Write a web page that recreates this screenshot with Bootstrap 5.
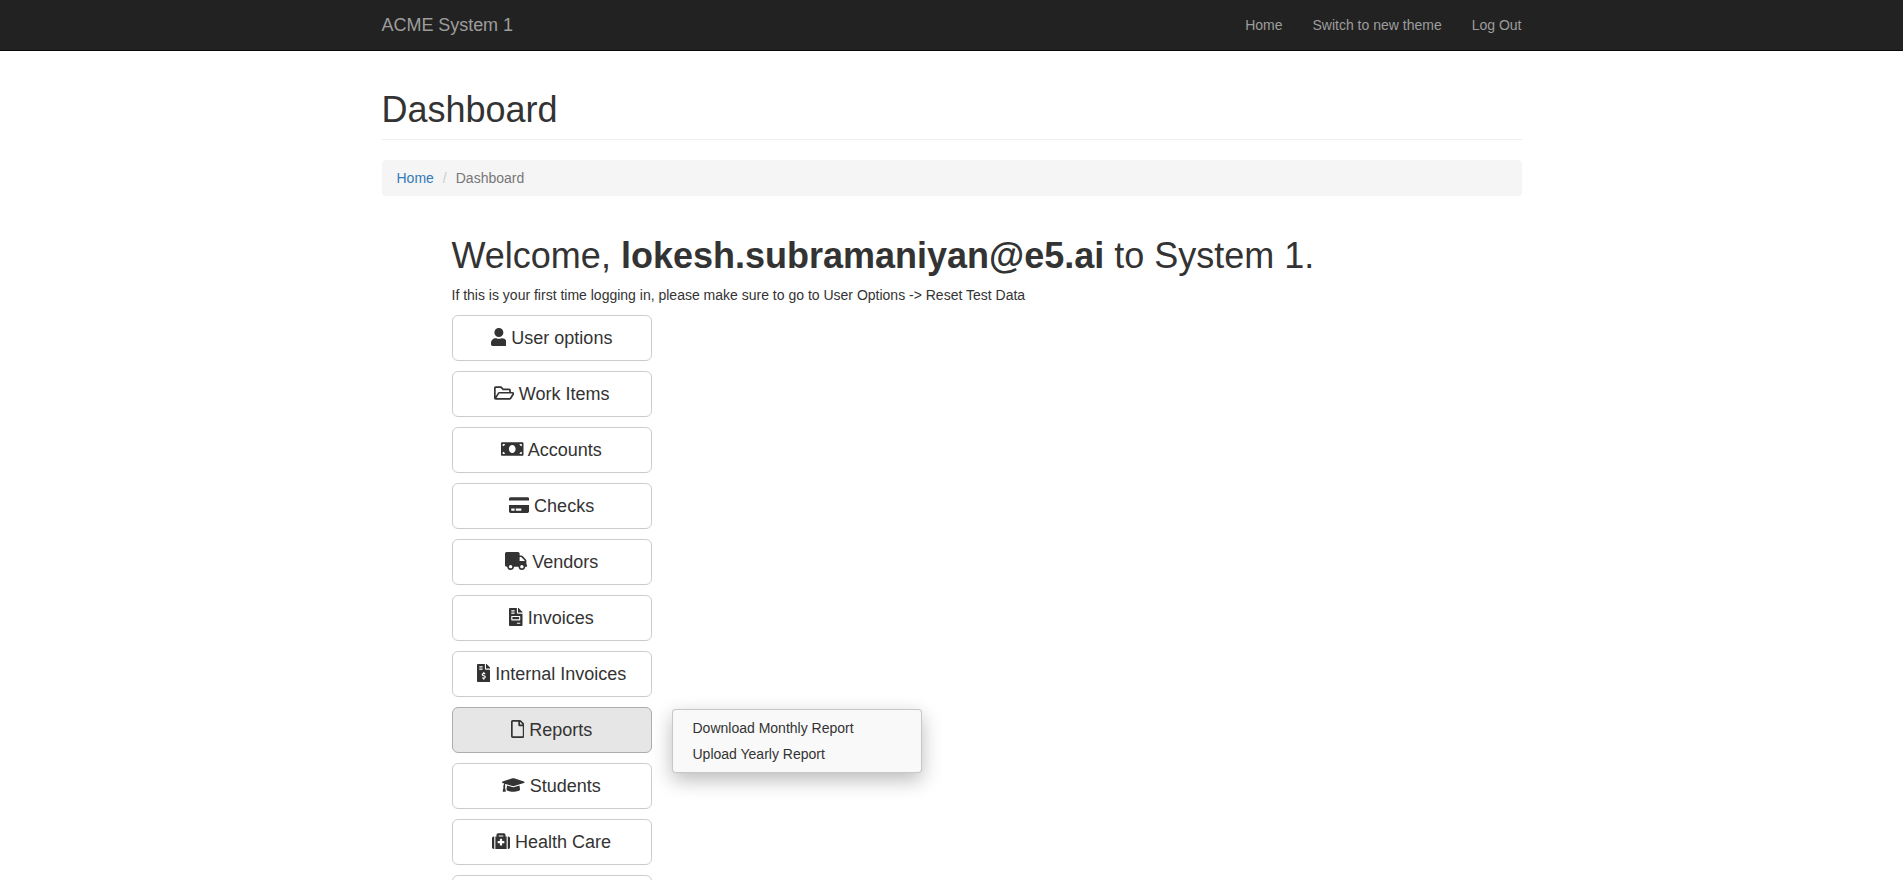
<!DOCTYPE html>
<html lang="en">
<head>
<meta charset="utf-8">
<meta name="viewport" content="width=device-width, initial-scale=1">
<title>ACME System 1 - Dashboard</title>
<link href="https://cdn.jsdelivr.net/npm/bootstrap@5.3.0/dist/css/bootstrap.min.css" rel="stylesheet">
<style>
  body { font-family: "Liberation Sans", Arial, sans-serif; font-size: 14px; line-height: 20px; color: #333; height: 100vh; overflow: hidden; }
  .container { max-width: 1170px; padding-left: 15px; padding-right: 15px; }
  .topbar { background: #222; border-bottom: 1px solid #080808; height: 51px; padding: 0; }
  .topbar .container { padding: 0 15px; }
  .topbar .navbar-brand { font-size: 18px; line-height: 20px; letter-spacing: -.04px; padding: 15px 0; margin: 0; color: #9d9d9d; }
  .topbar .navbar-nav .nav-link { color: #9d9d9d; padding: 15px; line-height: 20px; }
  .topbar .navbar-nav { margin-right: -15px; }
  .page-title { font-size: 36px; font-weight: 400; line-height: 1.1; margin: 0; }
  .page-top { margin: 39.4px 0 20px; padding-bottom: 9px; border-bottom: 1px solid #eee; }
  .breadcrumb { --bs-breadcrumb-divider-color: #ccc; background: #f5f5f5; border-radius: 4px; padding: 8px 15px; margin: 0 0 40px; font-size: 14px; }
  .breadcrumb a { color: #337ab7; text-decoration: none; }
  .breadcrumb .breadcrumb-item.active { color: #777; }
  .breadcrumb-item + .breadcrumb-item { padding-left: 4px; }
  .breadcrumb-item + .breadcrumb-item::before { padding: 0 9px 0 5px; }
  .welcome { padding-left: 70px; }
  .intro { margin: 9px 0 10.6px; }
  .menu-stack { width: 200px; gap: 10px; }
  .menu-stack .btn { --bs-btn-color: #333; --bs-btn-bg: #fff; --bs-btn-border-color: #ccc; --bs-btn-hover-color: #333; --bs-btn-hover-bg: #e6e6e6; --bs-btn-hover-border-color: #adadad; --bs-btn-active-color: #333; --bs-btn-active-bg: #e6e6e6; --bs-btn-active-border-color: #adadad;
    width: 200px; height: 46px; font-size: 18px; line-height: 24px; padding: 10px 0; border-radius: 6px; white-space: nowrap; }
  .menu-stack svg { height: 1em; vertical-align: -.125em; fill: currentColor; }
  .flyout.dropdown-menu { left: 220px; top: 2px; width: 250px; margin: 0; padding: 5px 0; font-size: 14px; color: #333; background: #f9f9f9; border: 1px solid rgba(0,0,0,.2); border-radius: 4px; box-shadow: 0 7px 20px rgba(0,0,0,.27); }
  .flyout .dropdown-item { color: #333; padding: 3px 20px; line-height: 20px; }
</style>
</head>
<body>
<nav class="navbar navbar-expand topbar">
  <div class="container">
    <a class="navbar-brand" href="#">ACME System 1</a>
    <ul class="navbar-nav ms-auto">
      <li class="nav-item"><a class="nav-link" href="#">Home</a></li>
      <li class="nav-item"><a class="nav-link" href="#">Switch to new theme</a></li>
      <li class="nav-item"><a class="nav-link" href="#">Log Out</a></li>
    </ul>
  </div>
</nav>
<main class="container">
  <div class="page-top"><h1 class="page-title">Dashboard</h1></div>
  <ol class="breadcrumb">
    <li class="breadcrumb-item"><a href="#">Home</a></li>
    <li class="breadcrumb-item active">Dashboard</li>
  </ol>
  <div class="welcome">
    <h1 class="page-title">Welcome, <b>lokesh.subramaniyan@e5.ai</b> to System 1.</h1>
    <p class="intro">If this is your first time logging in, please make sure to go to User Options -&gt; Reset Test Data</p>
    <div class="menu-stack d-flex flex-column">
      <button class="btn" type="button"><svg viewBox="0 0 448 512"><path d="M224 256c70.7 0 128-57.3 128-128S294.7 0 224 0 96 57.3 96 128s57.3 128 128 128zm89.6 32h-16.7c-22.2 10.2-46.9 16-72.9 16s-50.6-5.8-72.9-16h-16.7C60.2 288 0 348.2 0 422.4V464c0 26.5 21.5 48 48 48h352c26.5 0 48-21.5 48-48v-41.6c0-74.2-60.2-134.4-134.4-134.4z"/></svg> User options</button>
      <button class="btn" type="button"><svg viewBox="0 0 576 512"><path d="M527.9 224H480v-48c0-26.5-21.5-48-48-48H272l-64-64H48C21.5 64 0 85.5 0 112v288c0 26.5 21.5 48 48 48h400c16.5 0 31.9-8.5 40.7-22.6l79.9-128c20-31.9-3-73.4-40.7-73.4zM48 118c0-3.3 2.7-6 6-6h134.1l64 64H426c3.3 0 6 2.7 6 6v42H152c-16.8 0-32.4 8.8-41.1 23.2L48 351.4zm400 282H72l77.2-128H528z"/></svg> Work Items</button>
      <button class="btn" type="button"><svg viewBox="0 0 640 512"><path d="M608 64H32C14.33 64 0 78.33 0 96v320c0 17.67 14.33 32 32 32h576c17.67 0 32-14.33 32-32V96c0-17.67-14.33-32-32-32zM48 400v-64c35.35 0 64 28.65 64 64H48zm0-224v-64h64c0 35.35-28.65 64-64 64zm272 192c-53.02 0-96-50.15-96-112 0-61.86 42.98-112 96-112s96 50.13 96 112c0 61.87-43 112-96 112zm272 32h-64c0-35.35 28.65-64 64-64v64zm0-224c-35.35 0-64-28.65-64-64h64v64z"/></svg> Accounts</button>
      <button class="btn" type="button"><svg viewBox="0 0 576 512"><path d="M0 432c0 26.5 21.5 48 48 48h480c26.5 0 48-21.5 48-48V256H0v176zm192-68c0-6.6 5.4-12 12-12h136c6.6 0 12 5.4 12 12v40c0 6.6-5.4 12-12 12H204c-6.6 0-12-5.4-12-12v-40zm-128 0c0-6.6 5.4-12 12-12h72c6.6 0 12 5.4 12 12v40c0 6.6-5.4 12-12 12H76c-6.6 0-12-5.4-12-12v-40zM576 80v48H0V80c0-26.5 21.5-48 48-48h480c26.5 0 48 21.5 48 48z"/></svg> Checks</button>
      <button class="btn" type="button"><svg viewBox="0 0 640 512"><path d="M624 352h-16V243.9c0-12.7-5.1-24.9-14.1-33.9L494 110.1c-9-9-21.2-14.1-33.9-14.1H416V48c0-26.5-21.5-48-48-48H48C21.5 0 0 21.5 0 48v320c0 26.5 21.5 48 48 48h16c0 53 43 96 96 96s96-43 96-96h128c0 53 43 96 96 96s96-43 96-96h48c8.8 0 16-7.2 16-16v-32c0-8.8-7.2-16-16-16zM160 464c-26.5 0-48-21.5-48-48s21.5-48 48-48 48 21.5 48 48-21.5 48-48 48zm320 0c-26.5 0-48-21.5-48-48s21.5-48 48-48 48 21.5 48 48-21.5 48-48 48zm80-208H416V144h44.1l99.9 99.9V256z"/></svg> Vendors</button>
      <button class="btn" type="button"><svg viewBox="0 0 384 512"><path d="M288 256H96v64h192v-64zm89-151L279.1 7c-4.5-4.5-10.6-7-17-7H256v128h128v-6.1c0-6.3-2.5-12.4-7-16.9zm-153 31V0H24C10.7 0 0 10.7 0 24v464c0 13.3 10.7 24 24 24h336c13.3 0 24-10.7 24-24V160H248c-13.2 0-24-10.8-24-24zM64 72c0-4.42 3.58-8 8-8h80c4.42 0 8 3.58 8 8v16c0 4.42-3.58 8-8 8H72c-4.42 0-8-3.58-8-8V72zm0 64c0-4.42 3.58-8 8-8h80c4.42 0 8 3.58 8 8v16c0 4.42-3.58 8-8 8H72c-4.42 0-8-3.58-8-8v-16zm256 304c0 4.42-3.58 8-8 8h-80c-4.42 0-8-3.58-8-8v-16c0-4.42 3.58-8 8-8h80c4.42 0 8 3.58 8 8v16zm0-200v96c0 8.84-7.16 16-16 16H80c-8.84 0-16-7.16-16-16v-96c0-8.84 7.16-16 16-16h224c8.84 0 16 7.16 16 16z"/></svg> Invoices</button>
      <button class="btn" type="button"><svg viewBox="0 0 384 512"><path d="M377 105L279.1 7c-4.5-4.5-10.6-7-17-7H256v128h128v-6.1c0-6.3-2.5-12.4-7-16.9zm-153 31V0H24C10.7 0 0 10.7 0 24v464c0 13.3 10.7 24 24 24h336c13.3 0 24-10.7 24-24V160H248c-13.2 0-24-10.8-24-24zM64 72c0-4.42 3.58-8 8-8h80c4.42 0 8 3.58 8 8v16c0 4.42-3.58 8-8 8H72c-4.42 0-8-3.58-8-8V72zm0 80v-16c0-4.42 3.58-8 8-8h80c4.42 0 8 3.58 8 8v16c0 4.42-3.58 8-8 8H72c-4.42 0-8-3.58-8-8zm144 263.88V440c0 4.42-3.58 8-8 8h-16c-4.42 0-8-3.58-8-8v-24.29c-11.29-.58-22.27-4.52-31.37-11.35-3.9-2.93-4.1-8.77-.57-12.14l11.75-11.21c2.77-2.64 6.89-2.76 10.13-.73 3.87 2.42 8.26 3.72 12.82 3.72h28.11c6.5 0 11.8-5.92 11.8-13.19 0-5.95-3.61-11.19-8.77-12.73l-45-13.5c-18.59-5.58-31.58-23.42-31.58-43.39 0-24.52 19.05-44.44 42.67-45.07V232c0-4.42 3.58-8 8-8h16c4.42 0 8 3.58 8 8v24.29c11.29.58 22.27 4.51 31.37 11.35 3.9 2.93 4.1 8.77.57 12.14l-11.75 11.21c-2.77 2.64-6.89 2.76-10.13.73-3.87-2.43-8.26-3.72-12.82-3.72h-28.11c-6.5 0-11.8 5.92-11.8 13.19 0 5.95 3.61 11.19 8.77 12.73l45 13.5c18.59 5.58 31.58 23.42 31.58 43.39 0 24.53-19.05 44.44-42.67 45.07z"/></svg> Internal Invoices</button>
      <div class="position-relative">
        <button class="btn active d-block" type="button"><svg viewBox="0 0 384 512"><path d="M369.9 97.9L286 14C277 5 264.8-.1 252.1-.1H48C21.5 0 0 21.5 0 48v416c0 26.5 21.5 48 48 48h288c26.5 0 48-21.5 48-48V131.9c0-12.7-5.1-25-14.1-34zM332.1 128H256V51.9l76.1 76.1zM48 464V48h160v104c0 13.3 10.7 24 24 24h104v288H48z"/></svg> Reports</button>
        <ul class="dropdown-menu show flyout">
          <li><a class="dropdown-item" href="#">Download Monthly Report</a></li>
          <li><a class="dropdown-item" href="#">Upload Yearly Report</a></li>
        </ul>
      </div>
      <button class="btn" type="button"><svg viewBox="0 0 640 512"><path d="M622.34 153.2L343.4 67.5c-15.2-4.67-31.6-4.67-46.79 0L17.66 153.2c-23.54 7.23-23.54 38.36 0 45.59l48.63 14.94c-10.67 13.19-17.23 29.28-17.88 46.9C38.78 266.15 32 276.11 32 288c0 10.78 5.68 19.85 13.86 25.65L20.33 428.53C18.11 438.52 25.71 448 35.94 448h56.11c10.24 0 17.84-9.48 15.62-19.47L82.14 313.65C90.32 307.85 96 298.78 96 288c0-11.57-6.47-21.25-15.66-26.87.76-15.02 8.44-28.3 20.69-36.72L296.6 284.5c9.06 2.78 26.44 6.25 46.79 0l278.95-85.7c23.55-7.24 23.55-38.36 0-45.6zM352.79 315.09c-28.53 8.76-52.84 3.92-65.59 0l-145.02-44.55L128 384c0 35.35 85.96 64 192 64s192-28.65 192-64l-14.18-113.47-145.03 44.56z"/></svg> Students</button>
      <button class="btn" type="button"><svg viewBox="0 0 512 512"><path d="M96 480h320V128h-32V80c0-26.51-21.49-48-48-48H176c-26.51 0-48 21.49-48 48v48H96v352zm96-384h128v32H192V96zm320 80v256c0 26.51-21.49 48-48 48h-16V128h16c26.51 0 48 21.49 48 48zM64 480H48c-26.51 0-48-21.49-48-48V176c0-26.51 21.49-48 48-48h16v352zm288-208v32c0 8.837-7.163 16-16 16h-48v48c0 8.837-7.163 16-16 16h-32c-8.837 0-16-7.163-16-16v-48h-48c-8.837 0-16-7.163-16-16v-32c0-8.837 7.163-16 16-16h48v-48c0-8.837 7.163-16 16-16h32c8.837 0 16 7.163 16 16v48h48c8.837 0 16 7.163 16 16z"/></svg> Health Care</button>
      <button class="btn" type="button"></button>
    </div>
  </div>
</main>
<script src="https://cdn.jsdelivr.net/npm/bootstrap@5.3.0/dist/js/bootstrap.bundle.min.js"></script>
</body>
</html>
